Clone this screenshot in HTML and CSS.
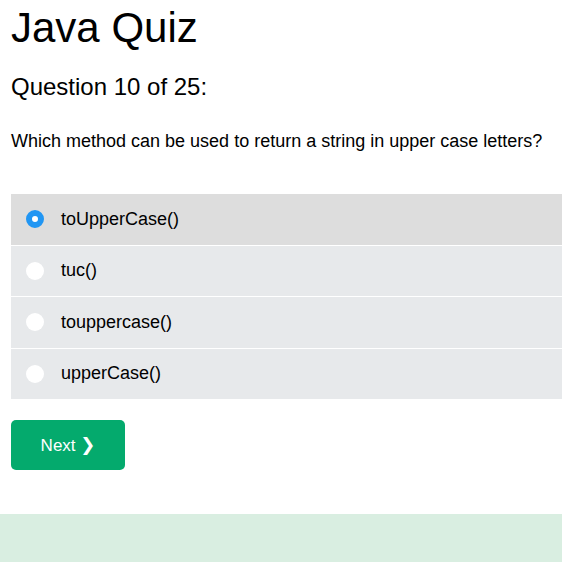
FILE: index.html
```html
<!DOCTYPE html>
<html>
<head>
<meta charset="utf-8">
<link rel="stylesheet" href="styles.css">
</head>
<body>
<div class="page">
  <h1 class="title">Java Quiz</h1>
  <h2 class="qnum">Question 10 of 25:</h2>
  <p class="qtext">Which method can be used to return a string in upper case letters?</p>
  <div class="options">
    <label class="option selected"><span class="radio checked"></span><span class="label">toUpperCase()</span></label>
    <label class="option"><span class="radio"></span><span class="label">tuc()</span></label>
    <label class="option"><span class="radio"></span><span class="label">touppercase()</span></label>
    <label class="option"><span class="radio"></span><span class="label">upperCase()</span></label>
  </div>
  <button class="next">Next <span class="chev">❯</span></button>
</div>
<div class="footer"></div>
</body>
</html>
```
FILE: styles.css
```css
html, body {
  margin: 0;
  padding: 0;
  background: #fff;
  overflow: hidden;
}
body {
  font-family: "Liberation Sans", Arial, sans-serif;
  color: #000;
}
.page {
  padding: 7px 0 0 11px;
}
.title {
  margin: 0;
  font-size: 42px;
  line-height: 42px;
  font-weight: normal;
}
.qnum {
  margin: 26px 0 0;
  font-size: 24px;
  line-height: 24px;
  font-weight: normal;
}
.qtext {
  margin: 32.5px 0 0;
  font-size: 18px;
  line-height: 18px;
}
.options {
  margin-top: 44.5px;
  display: flex;
  flex-direction: column;
  gap: 1px;
}
.option {
  height: 50.5px;
  background: #e7e9eb;
  display: flex;
  align-items: center;
  padding-left: 15px;
  font-size: 18px;
}
.option.selected {
  background: #dddddd;
}
.radio {
  width: 18px;
  height: 18px;
  border-radius: 50%;
  background: #fff;
  box-sizing: border-box;
  flex: none;
}
.radio.checked {
  border: 6px solid #2196f3;
}
.label {
  margin-left: 17px;
}
.next {
  margin-top: 21px;
  display: block;
  width: 114px;
  height: 50px;
  border: none;
  border-radius: 5px;
  background: #04aa6d;
  color: #fff;
  font-family: "Liberation Sans", Arial, sans-serif;
  font-size: 17px;
  padding: 0;
}
.chev {
  font-family: "DejaVu Sans", sans-serif;
  font-size: 18px;
  font-weight: bold;
}
.footer {
  margin-top: 44px;
  height: 48px;
  background: #d9eee1;
}
```
